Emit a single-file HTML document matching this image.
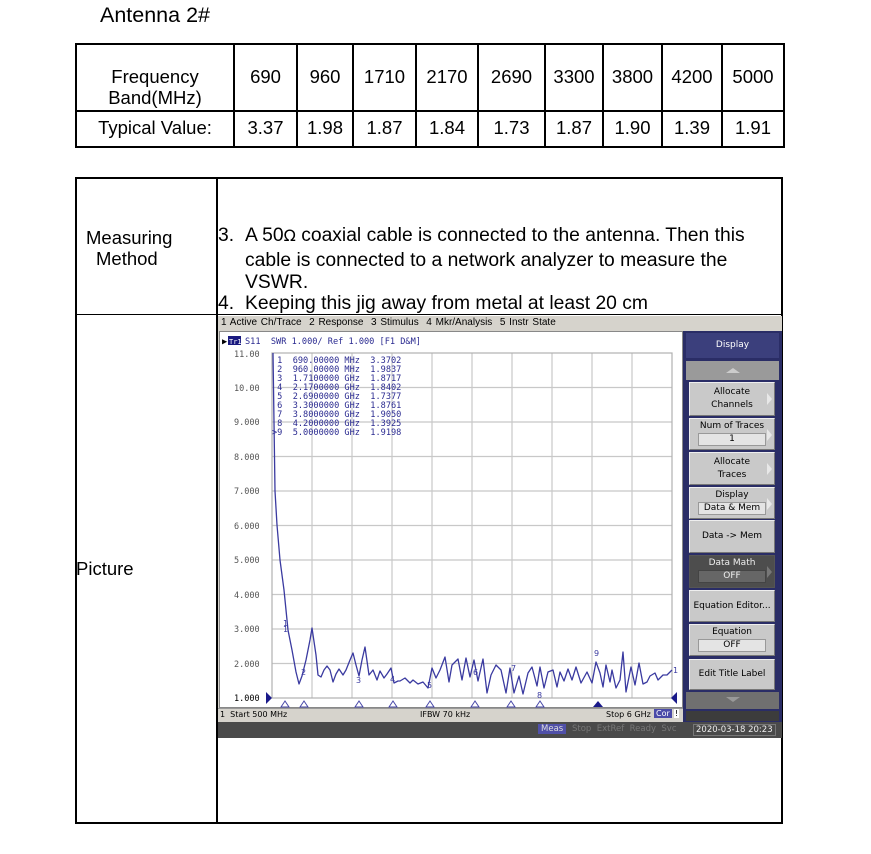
<!DOCTYPE html>
<html><head><meta charset="utf-8"><style>
*{margin:0;padding:0;box-sizing:border-box}
body{width:871px;height:854px;background:#fff;position:relative;overflow:hidden;font-family:"Liberation Sans",Arial,sans-serif;color:#000}
.a{position:absolute;white-space:nowrap}
.t{font-size:18.5px}
.p{font-size:19.3px}
.hl{position:absolute;background:#000;height:1.5px}
.vl{position:absolute;background:#000;width:1.5px}
.c{position:absolute;text-align:center;font-size:18.5px}
.sm{font-family:"DejaVu Sans","Liberation Sans",sans-serif;font-size:9.5px;color:#000}
.btn{position:absolute;left:689px;width:86px;background:#c9c9c9;border:1px solid #eee;border-right-color:#777;border-bottom-color:#777;text-align:center;font-family:"DejaVu Sans",sans-serif;font-size:9px;line-height:13px;color:#000}
.box{display:block;margin:0 auto;width:68px;background:#e4e4e4;border:1px solid #999;line-height:11px}
.ar{position:absolute;right:2px;top:10px;width:0;height:0;border-top:6px solid transparent;border-bottom:6px solid transparent;border-left:5px solid #e8e8e8}
svg text{white-space:pre}
</style></head><body>
<div class="a" style="left:100px;top:3px;font-size:21.5px">Antenna 2#</div>

<div class="hl" style="left:75px;top:43px;width:710px;height:2px"></div>
<div class="hl" style="left:75px;top:110px;width:710px"></div>
<div class="hl" style="left:75px;top:146px;width:710px;height:2px"></div>
<div class="vl" style="left:75px;top:43px;height:105px"></div>
<div class="vl" style="left:233px;top:43px;height:105px"></div>
<div class="vl" style="left:296px;top:43px;height:105px"></div>
<div class="vl" style="left:352px;top:43px;height:105px"></div>
<div class="vl" style="left:415px;top:43px;height:105px"></div>
<div class="vl" style="left:477px;top:43px;height:105px"></div>
<div class="vl" style="left:544px;top:43px;height:105px"></div>
<div class="vl" style="left:602px;top:43px;height:105px"></div>
<div class="vl" style="left:661px;top:43px;height:105px"></div>
<div class="vl" style="left:721px;top:43px;height:105px"></div>
<div class="vl" style="left:783px;top:43px;height:105px"></div>
<div class="c" style="left:77px;width:156px;top:66px;line-height:21px">Frequency<br>Band(MHz)</div>
<div class="c" style="left:235px;width:61px;top:66px">690</div>
<div class="c" style="left:298px;width:54px;top:66px">960</div>
<div class="c" style="left:354px;width:61px;top:66px">1710</div>
<div class="c" style="left:417px;width:60px;top:66px">2170</div>
<div class="c" style="left:479px;width:65px;top:66px">2690</div>
<div class="c" style="left:546px;width:56px;top:66px">3300</div>
<div class="c" style="left:604px;width:57px;top:66px">3800</div>
<div class="c" style="left:663px;width:58px;top:66px">4200</div>
<div class="c" style="left:723px;width:60px;top:66px">5000</div>
<div class="c" style="left:77px;width:156px;top:117px">Typical Value:</div>
<div class="c" style="left:235px;width:61px;top:117px">3.37</div>
<div class="c" style="left:298px;width:54px;top:117px">1.98</div>
<div class="c" style="left:354px;width:61px;top:117px">1.87</div>
<div class="c" style="left:417px;width:60px;top:117px">1.84</div>
<div class="c" style="left:479px;width:65px;top:117px">1.73</div>
<div class="c" style="left:546px;width:56px;top:117px">1.87</div>
<div class="c" style="left:604px;width:57px;top:117px">1.90</div>
<div class="c" style="left:663px;width:58px;top:117px">1.39</div>
<div class="c" style="left:723px;width:60px;top:117px">1.91</div>

<div class="hl" style="left:75px;top:177px;width:708px;height:2px"></div>
<div class="hl" style="left:75px;top:314px;width:708px;height:1px"></div>
<div class="hl" style="left:75px;top:822px;width:708px"></div>
<div class="vl" style="left:75px;top:177px;height:647px"></div>
<div class="vl" style="left:216px;top:177px;height:647px"></div>
<div class="vl" style="left:781px;top:177px;height:647px"></div>
<div class="a t" style="left:86px;top:227px">Measuring</div>
<div class="a t" style="left:96px;top:248px">Method</div>
<div class="a p" style="left:218px;top:225px">3.</div>
<div class="a p" style="left:245px;top:225px">A 50<span style="font-family:'DejaVu Sans',sans-serif;font-size:16px">Ω</span> coaxial cable is connected to the antenna. Then this</div>
<div class="a p" style="left:245px;top:250px">cable is connected to a network analyzer to measure the</div>
<div class="a p" style="left:245px;top:272px">VSWR.</div>
<div class="a p" style="left:218px;top:293px">4.</div>
<div class="a p" style="left:245px;top:293px">Keeping this jig away from metal at least 20 cm</div>
<div class="a t" style="left:76px;top:558px">Picture</div>

<div class="a" style="left:218px;top:316px;width:564px;height:422px;background:#d6d3cc"></div>
<div class="a sm" style="left:221px;top:317px;font-family:'Liberation Sans',sans-serif;font-size:10px;word-spacing:1px">1 Active Ch/Trace &nbsp;2 Response &nbsp;3 Stimulus &nbsp;4 Mkr/Analysis &nbsp;5 Instr State</div>
<div class="a" style="left:219px;top:331px;width:464px;height:377px;background:#fff;border:1px solid #888"></div>
<svg class="a" style="left:0;top:0" width="871" height="854">
<g stroke="#c8c8c8" stroke-width="1.2">
<line x1="272" y1="387.5" x2="672" y2="387.5"/><line x1="272" y1="422" x2="672" y2="422"/><line x1="272" y1="456.5" x2="672" y2="456.5"/><line x1="272" y1="491" x2="672" y2="491"/><line x1="272" y1="525.5" x2="672" y2="525.5"/><line x1="272" y1="560" x2="672" y2="560"/><line x1="272" y1="594.5" x2="672" y2="594.5"/><line x1="272" y1="629" x2="672" y2="629"/><line x1="272" y1="663.5" x2="672" y2="663.5"/>
<line x1="312" y1="353" x2="312" y2="698"/><line x1="352" y1="353" x2="352" y2="698"/><line x1="392" y1="353" x2="392" y2="698"/><line x1="432" y1="353" x2="432" y2="698"/><line x1="472" y1="353" x2="472" y2="698"/><line x1="512" y1="353" x2="512" y2="698"/><line x1="552" y1="353" x2="552" y2="698"/><line x1="592" y1="353" x2="592" y2="698"/><line x1="632" y1="353" x2="632" y2="698"/>
</g>
<rect x="272" y="353" width="400" height="345" fill="none" stroke="#b0b0b0" stroke-width="1.2"/>
<polyline fill="none" stroke="#3a3aa0" stroke-width="1.3" stroke-linejoin="round" points="273,353 275,491 277,525 280,560 284,590 288,630 292,650 296,672 299,684 302,676 306,660 310,640 312,628 316,655 318,675 321,677 324,670 327,666 330,670 333,682 336,674 339,669 343,675 346,670 350,660 353,653 356,665 359,676 362,660 365,647 369,675 373,670 377,680 380,671 384,678 387,674 391,668 394,683 398,681 400,681 405,678 410,683 413,680 418,684 423,682 428,688 432,668 436,678 440,670 445,657 449,682 452,665 458,659 462,680 466,658 470,677 474,660 478,681 483,659 487,693 491,675 496,665 501,670 506,693 510,668 514,693 519,676 523,694 528,673 532,667 537,686 540,667 544,688 548,672 553,670 557,687 560,672 564,681 568,669 572,680 576,667 581,683 587,672 592,683 596,662 600,673 603,687 606,665 610,682 612,670 616,688 620,680 623,652 626,692 631,667 635,685 639,663 643,684 647,682 650,676 655,673 658,680 663,675 667,675 672,670"/>
<g fill="none" stroke="#4848a8" stroke-width="1">
<path d="M281,707 L285,701 L289,707Z"/><path d="M300,707 L304,701 L308,707Z"/><path d="M355,707 L359,701 L363,707Z"/><path d="M389,707 L393,701 L397,707Z"/><path d="M426,707 L430,701 L434,707Z"/><path d="M471,707 L475,701 L479,707Z"/><path d="M507,707 L511,701 L515,707Z"/><path d="M536,707 L540,701 L544,707Z"/>
</g>
<path d="M593,707 L598,701 L603,707Z" fill="#1a1a8a"/>
<path d="M677,692 L677,704 L671,698Z" fill="#1a1a8a"/>
<path d="M266,692 L266,704 L272,698Z" fill="#1a1a8a"/>
<g font-family="DejaVu Sans,sans-serif" font-size="8" fill="#3a3aa0">
<text x="283" y="626">1</text><text x="283" y="632">1</text><text x="301" y="675">2</text><text x="356" y="683">3</text><text x="390" y="682">4</text><text x="427" y="688">5</text><text x="473" y="675">6</text><text x="511" y="671">7</text><text x="537" y="698">8</text><text x="594" y="656">9</text><text x="673" y="673">1</text>
</g>
<g font-family="DejaVu Sans Mono,monospace" font-size="8.5" fill="#555">
<text x="234" y="357">11.00</text><text x="234" y="391">10.00</text><text x="234" y="425">9.000</text><text x="234" y="460">8.000</text><text x="234" y="494">7.000</text><text x="234" y="529">6.000</text><text x="234" y="563">5.000</text><text x="234" y="598">4.000</text><text x="234" y="632">3.000</text><text x="234" y="667">2.000</text><text x="234" y="701" fill="#000">1.000</text>
</g>
<g font-family="DejaVu Sans Mono,monospace" font-size="8.6" fill="#2a2a90">
<text x="222" y="344" fill="#000">▶</text>
<rect x="228" y="336" width="13" height="9" fill="#1a1a80"/>
<text x="229" y="344" fill="#fff" font-size="7">Tr1</text>
<text x="245" y="344">S11  SWR 1.000/ Ref 1.000 [F1 D&amp;M]</text>
<text x="272" y="363"> 1  690.00000 MHz  3.3702</text>
<text x="272" y="372"> 2  960.00000 MHz  1.9837</text>
<text x="272" y="381"> 3  1.7100000 GHz  1.8717</text>
<text x="272" y="390"> 4  2.1700000 GHz  1.8402</text>
<text x="272" y="399"> 5  2.6900000 GHz  1.7377</text>
<text x="272" y="408"> 6  3.3000000 GHz  1.8761</text>
<text x="272" y="417"> 7  3.8000000 GHz  1.9050</text>
<text x="272" y="426"> 8  4.2000000 GHz  1.3925</text>
<text x="272" y="435">&gt;9  5.0000000 GHz  1.9198</text>
</g>
</svg>
<div class="a" style="left:218px;top:708px;width:465px;height:14px;background:#d6d3cc;border-top:1px solid #999"></div>
<div class="a sm" style="left:220px;top:710px;font-size:8px">1 &nbsp;Start 500 MHz</div>
<div class="a sm" style="left:420px;top:710px;font-size:8px">IFBW 70 kHz</div>
<div class="a sm" style="left:606px;top:710px;font-size:8px">Stop 6 GHz</div>
<div class="a sm" style="left:654px;top:709px;font-size:8px;background:#4a4aa8;color:#fff;padding:0 2px">Cor</div>
<div class="a sm" style="left:674px;top:709px;font-size:8px;background:#fff;padding:0 1px">!</div>
<div class="a" style="left:218px;top:722px;width:564px;height:16px;background:#4a4a4a"></div>
<div class="a sm" style="left:538px;top:724px;font-size:8.5px;color:#ddd;background:#5050a8;padding:0 3px">Meas</div>
<div class="a sm" style="left:572px;top:724px;font-size:8.5px;color:#777">Stop &nbsp;ExtRef &nbsp;Ready &nbsp;Svc</div>
<div class="a sm" style="left:693px;top:724px;font-size:8.5px;color:#eee;border:1px solid #777;padding:0 2px">2020-03-18 20:23</div>
<div class="a" style="left:683px;top:331px;width:99px;height:391px;background:#2a2d66"></div>
<div class="a" style="left:686px;top:333px;width:93px;height:25px;background:#3b3f7c;color:#fff;font-family:'DejaVu Sans',sans-serif;font-size:9px;text-align:center;line-height:25px">Display</div>
<div class="a" style="left:686px;top:361px;width:93px;height:19px;background:#9a9a9a"><div style="margin:7px auto 0;width:0;border-left:7px solid transparent;border-right:7px solid transparent;border-bottom:5px solid #ccc"></div></div>
<div class="btn" style="top:382px;height:34px;padding-top:3px">Allocate<br>Channels<span class="ar"></span></div>
<div class="btn" style="top:418px;height:32px;padding-top:1px">Num of Traces<span class="box">1</span><span class="ar"></span></div>
<div class="btn" style="top:452px;height:33px;padding-top:3px">Allocate<br>Traces<span class="ar"></span></div>
<div class="btn" style="top:487px;height:32px;padding-top:1px">Display<span class="box">Data &amp; Mem</span><span class="ar"></span></div>
<div class="btn" style="top:520px;height:33px;line-height:31px">Data -&gt; Mem</div>
<div class="btn" style="top:555px;height:33px;padding-top:1px;background:#4d4d4d;color:#eee;border-color:#555">Data Math<span class="box" style="background:#666;border-color:#444;color:#eee">OFF</span><span class="ar" style="border-left-color:#777"></span></div>
<div class="btn" style="top:590px;height:32px;line-height:30px">Equation Editor...</div>
<div class="btn" style="top:624px;height:32px;padding-top:1px">Equation<span class="box">OFF</span></div>
<div class="btn" style="top:659px;height:31px;line-height:29px">Edit Title Label</div>
<div class="a" style="left:686px;top:692px;width:93px;height:17px;background:#707070"><div style="margin:5px auto 0;width:0;border-left:7px solid transparent;border-right:7px solid transparent;border-top:5px solid #999"></div></div>
<div class="a" style="left:686px;top:711px;width:93px;height:10px;background:#3c3c3c"></div>
</body></html>
